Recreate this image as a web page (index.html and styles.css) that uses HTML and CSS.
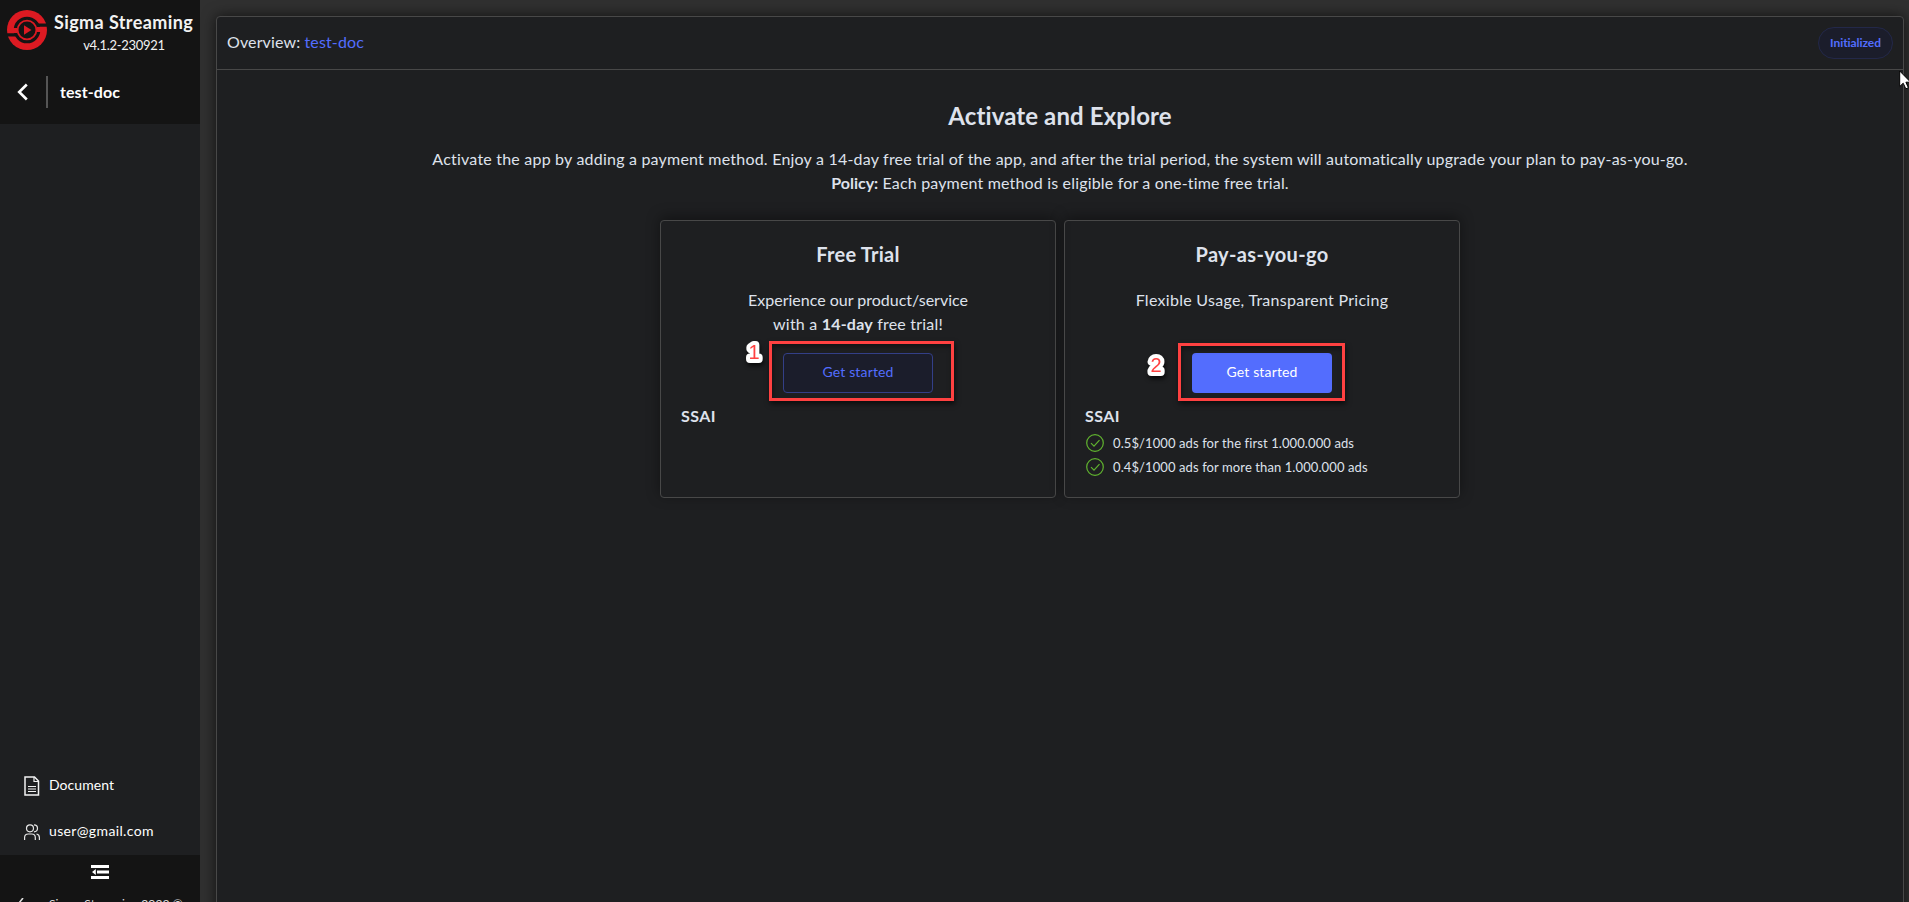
FILE: index.html
```
<!DOCTYPE html>
<html lang="en">
<head>
<meta charset="utf-8">
<title>Sigma Streaming</title>
<link rel="stylesheet" href="styles.css">
</head>
<body>
<div class="app">
  <aside class="sidebar">
    <div class="sidebar-top">
      <div class="brand">
        <svg class="logo" viewBox="0 0 40 40" width="40" height="40">
          <circle cx="20" cy="20" r="20" fill="#dc1a22"/>
          <circle cx="20" cy="20" r="11.8" fill="none" stroke="#141414" stroke-width="3"/>
          <path d="M5 18h5.500v5H5zM29.500 17H35v5h-5.500z" fill="#dc1a22"/>
          <path d="M0 23.300h9l2.500 3.200H0zM29 13.500h11v3.200h-9z" fill="#141414"/>
          <circle cx="20" cy="20" r="7.200" fill="none" stroke="#141414" stroke-width="2.600"/>
          <circle cx="20" cy="20" r="6.500" fill="#141414"/>
          <path d="M17 15.300v9.400l7.500-4.700z" fill="#dc1a22"/>
        </svg>
        <div class="brand-text">
          <div class="brand-name">Sigma Streaming</div>
          <div class="brand-version">v4.1.2-230921</div>
        </div>
      </div>
      <div class="crumb">
        <svg class="back" viewBox="0 0 12 18" width="12" height="18"><path d="M9.800 1.500 2.200 9l7.600 7.500" fill="none" stroke="#fff" stroke-width="2.600"/></svg>
        <span class="crumb-line"></span>
        <span class="crumb-name">test-doc</span>
      </div>
    </div>
    <nav class="links">
      <a class="link">
        <svg viewBox="0 0 16 20" width="16" height="20" fill="none" stroke="#f2f2f2" stroke-width="1.500"><path d="M1 1h9.500L14.500 5v14H1z"/><path d="M10 1v4.500h4.500M4 10.500h8M4 13h8M4 15.500h8" stroke-width="1.200"/></svg>
        <span class="link-doc">Document</span>
      </a>
      <a class="link">
        <svg viewBox="0 0 16 16" width="16" height="16" fill="none" stroke="#e6e6e6" stroke-width="1.200"><circle cx="6" cy="4.300" r="3.500"/><path d="M.6 16v-2.500Q.6 10 4.300 10h3.400q3.600 0 3.600 3.500V16M10 .8a3.500 3.500 0 0 1 0 7M12.500 10q2.900.5 2.900 3.500V16"/></svg>
        <span class="link-user">user@gmail.com</span>
      </a>
    </nav>
    <div class="sidebar-bottom">
      <svg class="fold" viewBox="0 0 18 14" width="18" height="14" fill="#fff"><path d="M0 0h18v3H0zM0 11h18v3H0zM6 5.500h12v3H6zM1 7l3.800-3v6z"/></svg>
      <div class="copyright">
        <svg viewBox="0 0 10 14" width="10" height="14"><path d="M8 0 2.500 7h4L3 14" fill="none" stroke="#ddd" stroke-width="1.600"/></svg>
        <span>Sigma Streaming 2023 ©</span>
      </div>
    </div>
  </aside>

  <main class="main">
    <section class="panel">
      <header class="panel-head">
        <div class="overview">Overview: <span>test-doc</span></div>
        <div class="status">Initialized</div>
      </header>
      <div class="panel-body">
        <h1>Activate and Explore</h1>
        <p class="intro">Activate the app by adding a payment method. Enjoy a 14-day free trial of the app, and after the trial period, the system will automatically upgrade your plan to pay-as-you-go.</p>
        <p class="intro policy"><b>Policy:</b> Each payment method is eligible for a one-time free trial.</p>
        <div class="plans">
          <article class="plan">
            <h2 class="free-title">Free Trial</h2>
            <p class="plan-text">Experience our product/service<br><span class="loose">with a <b>14-day</b> free trial!</span></p>
            <button class="btn btn-ghost">Get started</button>
            <h3>SSAI</h3>
            <span class="frame frame-1"></span>
            <svg class="step step-1" width="24" height="34"><text x="12" y="24" text-anchor="middle">1</text></svg>
          </article>
          <article class="plan">
            <h2 class="pay-title">Pay-as-you-go</h2>
            <p class="plan-text wide">Flexible Usage, Transparent Pricing</p>
            <button class="btn btn-solid">Get started</button>
            <h3>SSAI</h3>
            <ul class="prices">
              <li><svg viewBox="0 0 18 18" width="18" height="18"><circle cx="9" cy="9" r="8.300"/><path d="M5 9.200l3 3 5.500-6"/></svg>0.5$/1000 ads for the first 1.000.000 ads</li>
              <li><svg viewBox="0 0 18 18" width="18" height="18"><circle cx="9" cy="9" r="8.300"/><path d="M5 9.200l3 3 5.500-6"/></svg>0.4$/1000 ads for more than 1.000.000 ads</li>
            </ul>
            <span class="frame frame-2"></span>
            <svg class="step step-2" width="24" height="34"><text x="12" y="24" text-anchor="middle">2</text></svg>
          </article>
        </div>
      </div>
    </section>
  </main>
  <svg class="cursor" viewBox="0 0 14 21" width="14" height="21"><path d="M.7 1v15.500l3.500-3.300 2.600 5.600 2.600-1.100-2.500-5.500h4.800z" fill="#fff" stroke="#000"/></svg>
</div>
</body>
</html>
```
FILE: styles.css
```
* { box-sizing: border-box; }
body, h1, h2, h3, p, ul { margin: 0; padding: 0; }
body {
  font: 16px/24px Lato, "Noto Sans", sans-serif;
  color: #dee2ec;
  background: #303030;
  overflow: hidden;
}
svg { display: block; flex: none; }
.app { display: flex; height: 902px; position: relative; overflow: hidden; }

.sidebar { width: 200px; flex: none; display: flex; flex-direction: column; background: #1e1f21; color: #fff; }
.sidebar-top { height: 124px; background: #141414; }
.brand { display: flex; padding: 10px 0 0 7px; height: 76px; }
.brand-text { margin-left: 7px; width: 140px; }
.brand-name { font-size: 18px; font-weight: 700; line-height: 24px; letter-spacing: .4px; white-space: nowrap; color: #f2f2f2; }
.brand-version { margin-top: 1px; font-size: 13px; line-height: 20px; letter-spacing: -.3px; text-align: center; color: #f2f2f2; }
.crumb { display: flex; align-items: center; height: 32px; padding-left: 17px; }
.crumb-line { width: 2px; height: 32px; margin: 0 12px 0 17px; background: #555; }
.crumb-name { font-weight: 700; line-height: 31px; height: 32px; letter-spacing: .08px; }
.links { margin-top: auto; }
.link { display: flex; align-items: center; height: 46px; padding-left: 24px; font-size: 14px; }
.link svg { width: 16px; margin-right: 9px; }
.link span { padding-bottom: 2px; }
.link-doc { letter-spacing: .05px; }
.link-user { letter-spacing: .36px; }
.sidebar-bottom { height: 47px; background: #141414; overflow: hidden; }
.fold { margin: 10px auto 0; }
.copyright { display: flex; padding: 15px 0 0 15px; height: 40px; font-size: 12px; line-height: 20px; letter-spacing: .13px; white-space: nowrap; color: #ddd; }
.copyright svg { margin-right: 24px; margin-top: 4px; }

.main { flex: 1; padding: 16px 5px 0 16px; overflow: hidden; }
.panel { height: 900px; border: 1px solid #484848; border-radius: 4px; background: #1e1f21; box-shadow: 0 0 14px rgba(0, 0, 0, .65); }
.panel-head { display: flex; align-items: center; justify-content: space-between; height: 53px; padding: 0 10px; border-bottom: 1px solid #484848; }
.overview { letter-spacing: .13px; padding-bottom: 2px; }
.overview span { color: #536dfe; }
.status { height: 32px; width: 75px; border: 1px solid #232849; border-radius: 16px; background: #1b1d2b; color: #536dfe; font-size: 12px; font-weight: 700; line-height: 30px; text-align: center; letter-spacing: -.07px; }
.panel-body { padding-top: 31px; text-align: center; }
h1 { margin-bottom: 16px; font-size: 24px; line-height: 30px; letter-spacing: .12px; }
.intro { letter-spacing: .21px; }
.policy { letter-spacing: .17px; }
.intro b { letter-spacing: 0; }
.plans { display: flex; justify-content: center; gap: 8px; margin-top: 25px; }
.plan { position: relative; width: 396px; height: 278px; padding: 19px 20px; border: 1px solid #484848; border-radius: 4px; box-shadow: 0 -3px 14px rgba(0, 0, 0, .4); }
h2 { font-size: 20px; line-height: 28px; }
.free-title { letter-spacing: .25px; }
.pay-title { letter-spacing: .33px; }
.plan-text { height: 48px; margin: 20px 0 17px; }
.loose { letter-spacing: .2px; }
.wide { letter-spacing: .28px; }
.btn { display: block; height: 40px; margin: 0 auto; padding: 0 0 3px; border: 0; border-radius: 4px; font: 14px Lato, "Noto Sans", sans-serif; letter-spacing: .15px; }
.btn-ghost { width: 150px; border: 1px solid #333f87; background: #1b1d2b; color: #536dfe; }
.btn-solid { width: 140px; background: #536dfe; color: #fff; }
h3 { margin-top: 11px; font-size: 16px; line-height: 24px; letter-spacing: .45px; text-align: left; }
.prices { margin-top: 3px; list-style: none; font-size: 13px; line-height: 22px; letter-spacing: .1px; text-align: left; }
.prices li { display: flex; align-items: center; height: 24px; padding-left: 1px; }
.prices svg { margin-right: 9px; fill: none; stroke: #60b32f; stroke-width: 1.2; }

.frame { position: absolute; border: 3px solid #ff4141; box-shadow: 1px 3px 5px rgba(0, 0, 0, .6), inset 1px 3px 5px rgba(0, 0, 0, .4); }
.frame-1 { left: 108px; top: 120px; width: 185px; height: 60px; }
.frame-2 { left: 113px; top: 122px; width: 167px; height: 58px; }
.step { position: absolute; overflow: visible; filter: drop-shadow(1px 3px 2px rgba(0, 0, 0, .7)); }
.step text { font: 20px "Liberation Sans", Arial, sans-serif; fill: #ff4141; stroke: #fff; stroke-width: 8px; stroke-linejoin: round; paint-order: stroke; }
.step-1 { left: 81px; top: 114px; }
.step-2 { left: 79px; top: 127px; }
.cursor { position: absolute; left: 1899px; top: 70px; }
```
